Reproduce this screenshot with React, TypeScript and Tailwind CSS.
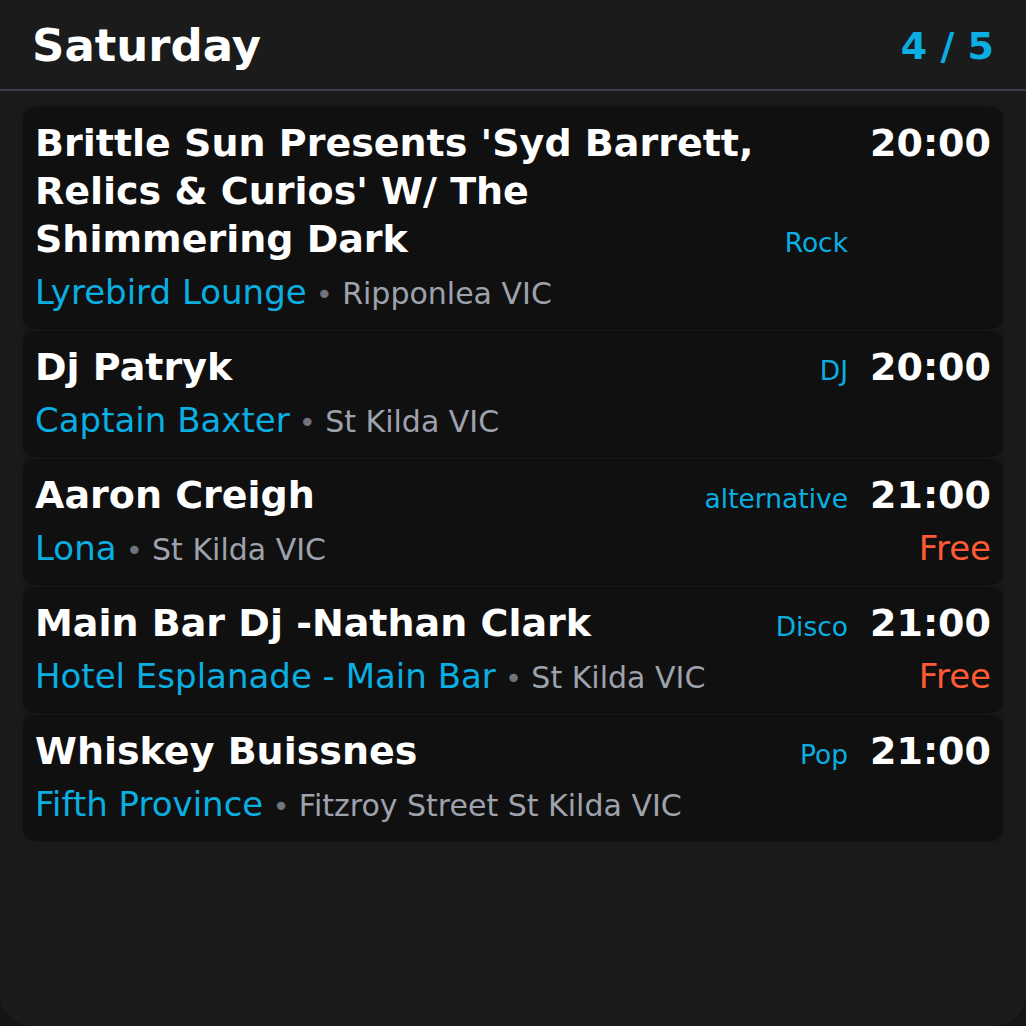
const events = [
  {
    title: "Brittle Sun Presents 'Syd Barrett, Relics & Curios' W/ The Shimmering Dark",
    genre: "Rock",
    time: "20:00",
    venue: "Lyrebird Lounge",
    place: "Ripponlea VIC",
    free: false,
  },
  { title: "Dj Patryk", genre: "DJ", time: "20:00", venue: "Captain Baxter", place: "St Kilda VIC", free: false },
  { title: "Aaron Creigh", genre: "alternative", time: "21:00", venue: "Lona", place: "St Kilda VIC", free: true },
  {
    title: "Main Bar Dj -Nathan Clark",
    genre: "Disco",
    time: "21:00",
    venue: "Hotel Esplanade - Main Bar",
    place: "St Kilda VIC",
    free: true,
  },
  {
    title: "Whiskey Buissnes",
    genre: "Pop",
    time: "21:00",
    venue: "Fifth Province",
    place: "Fitzroy Street St Kilda VIC",
    free: false,
  },
];

type Gig = (typeof events)[number];

function EventCard({ gig }: { gig: Gig }) {
  return (
    <div className="rounded-xl bg-[#101010] px-3 pt-3 pb-[15px] shadow-[0_0_8px_rgba(0,0,0,0.25)]">
      <div className="flex items-end">
        <div className="min-w-0 flex-1 pr-4 text-[38px] leading-[48px] font-bold text-white">{gig.title}</div>
        <div className="text-[26.5px] leading-[40px] text-[#0aaee0]">{gig.genre}</div>
        <div className="ml-[22px] self-start text-[38px] leading-[48px] font-bold text-white">{gig.time}</div>
      </div>
      <div className="mt-[7px] flex items-center">
        <div className="flex-1 text-[34px] leading-[44px]">
          <span className="text-[#0aaee0]">{gig.venue}</span>
          <span className="text-[29px] leading-[30px] text-[#6f747e]"> • </span>
          <span className="text-[30px] leading-[30px] text-[#9ea2ac]">{gig.place}</span>
        </div>
        {gig.free && <div className="text-[34px] leading-[44px] text-[#ff5a36]">Free</div>}
      </div>
    </div>
  );
}

export default function App() {
  return (
    <div className="h-[1026px] w-[1026px] overflow-hidden bg-[#151515] font-['DejaVu_Sans',sans-serif]">
      <div className="h-full rounded-b-[32px] bg-[#1b1b1b]">
        <header className="flex h-[91px] items-center justify-between border-b-2 border-[#3a3f49] px-8 pt-[3px]">
          <h1 className="text-[45px] font-bold text-white">Saturday</h1>
          <div className="text-[38px] font-bold text-[#0aaee0]">4 / 5</div>
        </header>
        <div className="flex flex-col gap-0.5 px-[23px] pt-4">
          {events.map((gig) => (
            <EventCard key={gig.title} gig={gig} />
          ))}
        </div>
      </div>
    </div>
  );
}
